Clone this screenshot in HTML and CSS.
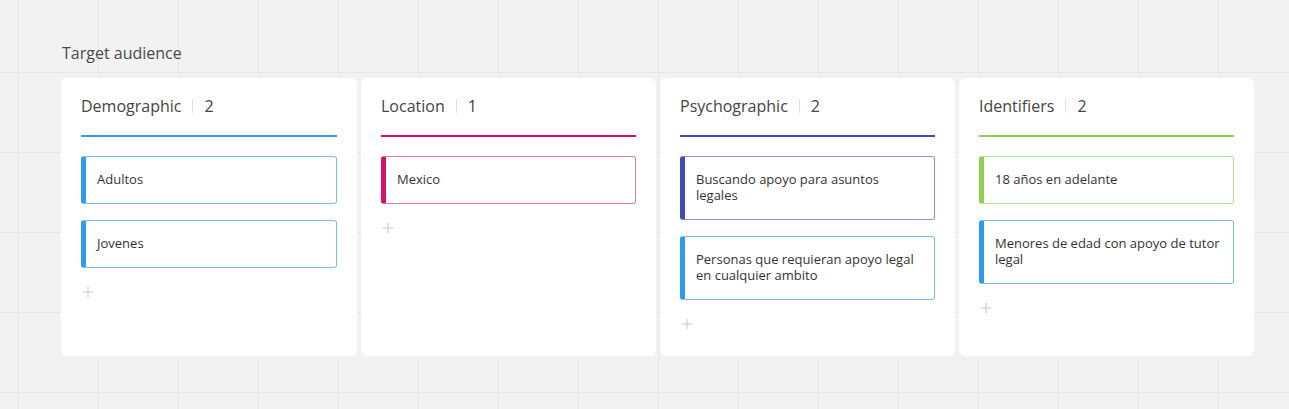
FILE: index.html
```html
<!DOCTYPE html>
<html>
<head>
<meta charset="utf-8">
<link rel="stylesheet" href="styles.css">
</head>
<body>
<div class="frame">
  <div class="title">Target audience</div>
  <div class="board">
    <div class="col col-blue">
      <div class="col-head"><span class="col-name">Demographic</span><span class="sep"></span><span class="count">2</span></div>
      <div class="cards">
        <div class="card card-blue">Adultos</div>
        <div class="card card-blue">Jovenes</div>
      </div>
      <div class="add"><svg width="12" height="12" viewBox="0 0 12 12"><path d="M6 0.5V11.5M0.5 6H11.5" stroke="#c8c8c8" stroke-width="1"/></svg></div>
    </div>
    <div class="col col-pink">
      <div class="col-head"><span class="col-name">Location</span><span class="sep"></span><span class="count">1</span></div>
      <div class="cards">
        <div class="card card-pink">Mexico</div>
      </div>
      <div class="add"><svg width="12" height="12" viewBox="0 0 12 12"><path d="M6 0.5V11.5M0.5 6H11.5" stroke="#c8c8c8" stroke-width="1"/></svg></div>
    </div>
    <div class="col col-indigo">
      <div class="col-head"><span class="col-name">Psychographic</span><span class="sep"></span><span class="count">2</span></div>
      <div class="cards">
        <div class="card card-indigo">Buscando apoyo para asuntos legales</div>
        <div class="card card-blue">Personas que requieran apoyo legal en cualquier ambito</div>
      </div>
      <div class="add"><svg width="12" height="12" viewBox="0 0 12 12"><path d="M6 0.5V11.5M0.5 6H11.5" stroke="#c8c8c8" stroke-width="1"/></svg></div>
    </div>
    <div class="col col-green">
      <div class="col-head"><span class="col-name">Identifiers</span><span class="sep"></span><span class="count">2</span></div>
      <div class="cards">
        <div class="card card-green">18 años en adelante</div>
        <div class="card card-blue">Menores de edad con apoyo de tutor legal</div>
      </div>
      <div class="add"><svg width="12" height="12" viewBox="0 0 12 12"><path d="M6 0.5V11.5M0.5 6H11.5" stroke="#c8c8c8" stroke-width="1"/></svg></div>
    </div>
  </div>
</div>
</body>
</html>
```
FILE: styles.css
```css
html, body {
  margin: 0;
  padding: 0;
}
body {
  width: 1289px;
  height: 409px;
  overflow: hidden;
  background-color: #f2f2f2;
  background-image:
    linear-gradient(to right, #e6e6e6 1px, transparent 1px),
    linear-gradient(to bottom, #e6e6e6 1px, transparent 1px);
  background-size: 80px 80px;
  background-position: 18px 72px;
  font-family: "Open Sans", "Noto Sans", sans-serif;
  color: #333;
}
.frame {
  padding: 42px 0 0 61px;
}
.title {
  font-size: 16px;
  line-height: 22px;
  color: #4a4a4a;
  padding-left: 1px;
  margin-bottom: 14px;
}
.board {
  display: grid;
  grid-template-columns: 296px 295px 295px 295px;
  gap: 4px;
}
.col {
  background: #fff;
  border-radius: 6px;
  padding: 0 20px 24px;
  display: flex;
  flex-direction: column;
}
.col-head {
  display: flex;
  align-items: center;
  height: 55px;
  padding-bottom: 2px;
  font-size: 16px;
  color: #444;
  border-bottom: 2px solid;
  margin-bottom: 19px;
}
.col-blue .col-head { border-color: #2d9bf0; }
.col-pink .col-head { border-color: #d5126a; }
.col-indigo .col-head { border-color: #414bb2; }
.col-green .col-head { border-color: #8fd14f; }
.col-head .col-name { line-height: 24px; }
.sep {
  width: 1px;
  height: 14px;
  background: #e0e0e0;
  margin: 0 11px;
}
.count { line-height: 24px; }
.cards {
  display: flex;
  flex-direction: column;
  gap: 16px;
}
.card {
  font-size: 13px;
  line-height: 16px;
  padding: 14px 12px 16px 11px;
  border: 1px solid;
  border-left-width: 5px;
  border-radius: 3px;
  color: #333;
}
.card-blue { border-color: #7cbdf0; border-left-color: #2d9bf0; }
.card-pink { border-color: #e07aa5; border-left-color: #d5126a; }
.card-indigo { border-color: #8a8fcc; border-left-color: #414bb2; }
.card-green { border-color: #b7e08e; border-left-color: #8fd14f; }
.add {
  margin-top: 16px;
  height: 16px;
  display: flex;
  align-items: center;
  padding-left: 1px;
}
.add svg { display: block; }
```
